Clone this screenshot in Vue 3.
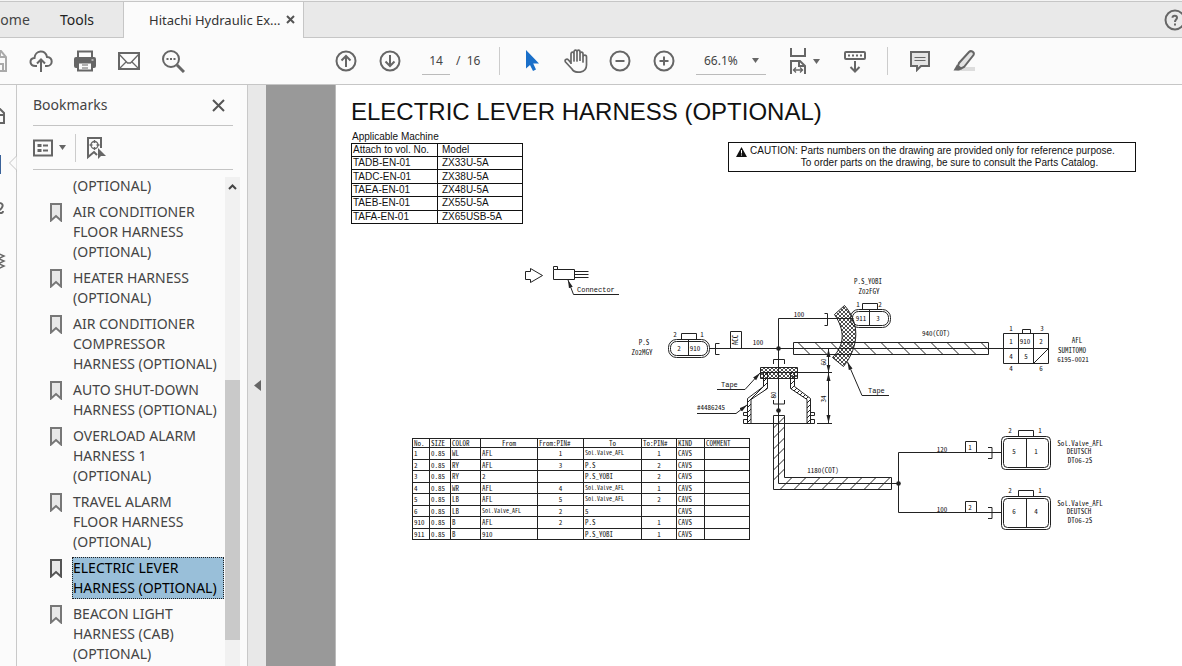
<script setup>
import { ref } from 'vue'

const page = ref('14')
const zoom = ref('66.1%')

const bookmarks = [
  { lines: '(OPTIONAL)', cont: true },
  { lines: 'AIR CONDITIONER\nFLOOR HARNESS\n(OPTIONAL)' },
  { lines: 'HEATER HARNESS\n(OPTIONAL)' },
  { lines: 'AIR CONDITIONER\nCOMPRESSOR\nHARNESS (OPTIONAL)' },
  { lines: 'AUTO SHUT-DOWN\nHARNESS (OPTIONAL)' },
  { lines: 'OVERLOAD ALARM\nHARNESS 1\n(OPTIONAL)' },
  { lines: 'TRAVEL ALARM\nFLOOR HARNESS\n(OPTIONAL)' },
  { lines: 'ELECTRIC LEVER\nHARNESS (OPTIONAL)', active: true },
  { lines: 'BEACON LIGHT\nHARNESS (CAB)\n(OPTIONAL)' },
]

const machines = [
  ['TADB-EN-01', 'ZX33U-5A'],
  ['TADC-EN-01', 'ZX38U-5A'],
  ['TAEA-EN-01', 'ZX48U-5A'],
  ['TAEB-EN-01', 'ZX55U-5A'],
  ['TAFA-EN-01', 'ZX65USB-5A'],
]

const wires = [
  ['1', '0.85', 'WL', 'AFL', '1', 'Sol.Valve_AFL', '1', 'CAVS', ''],
  ['2', '0.85', 'RY', 'AFL', '3', 'P.S', '2', 'CAVS', ''],
  ['3', '0.85', 'RY', '2', '', 'P.S_YOBI', '2', 'CAVS', ''],
  ['4', '0.85', 'WR', 'AFL', '4', 'Sol.Valve_AFL', '1', 'CAVS', ''],
  ['5', '0.85', 'LB', 'AFL', '5', 'Sol.Valve_AFL', '2', 'CAVS', ''],
  ['6', '0.85', 'LB', 'Sol.Valve_AFL', '2', '5', '', 'CAVS', ''],
  ['910', '0.85', 'B', 'AFL', '2', 'P.S', '1', 'CAVS', ''],
  ['911', '0.85', 'B', '910', '', 'P.S_YOBI', '1', 'CAVS', ''],
]

const valves = [
  { dy: 0, wire: '1', len: '120', a: '5', b: '1' },
  { dy: 60, wire: '2', len: '100', a: '6', b: '4' },
]

const mainHatch = Array.from({ length: 12 }, (_, i) => 798 + Math.round(i * 16.6))
const downHatch = [424, 434, 445, 455, 466, 476]
const lowHatch = Array.from({ length: 8 }, (_, i) => 780 + i * 14)
</script>

<template>
  <div class="app">
    <header class="tabs">
      <button class="tab home">Home</button>
      <button class="tab tools">Tools</button>
      <div class="tab doc">
        <span>Hitachi Hydraulic Ex...</span>
        <button class="x" aria-label="Close tab">
          <svg width="9" height="9" viewBox="0 0 9 9"><path d="M1 1l7 7M8 1l-7 7" stroke="#555" stroke-width="2" /></svg>
        </button>
      </div>
      <button class="help" aria-label="Help">
        <svg width="22" height="22" viewBox="0 0 22 22" fill="none" stroke="#666" stroke-width="2">
          <circle cx="11" cy="11" r="9.5" />
          <path d="M8.5 8.8C8.5 6.2 13 6.2 13 8.8C13 10.6 11 10.6 11 13M11 14.5v2" />
        </svg>
      </button>
    </header>

    <div class="toolbar">
      <div class="group files">
        <button class="tool" aria-label="Save">
          <svg width="24" height="26" viewBox="0 0 24 26" fill="none" stroke="#aaa" stroke-width="2">
            <path d="M2 3h14l5 6v14H2zM15 4v5h6M12 23v-7h6v7" />
          </svg>
        </button>
        <button class="tool" aria-label="Upload">
          <svg width="24" height="24" viewBox="0 0 24 24" fill="none" stroke="#666" stroke-width="2">
            <path d="M8 17H6.500C0 17 0 9.500 5.500 9C6 1 16.500 0 18 8C24.500 8.500 24 17 18 17h-2M12 23V11M8 14.500l4-4l4 4" />
          </svg>
        </button>
        <button class="tool" aria-label="Print">
          <svg width="24" height="24" viewBox="0 0 24 24">
            <path d="M5 2.500h14V9H5z" fill="#fbfbfb" stroke="#666" stroke-width="2" />
            <path d="M3 8h18a2 2 0 0 1 2 2v7a2 2 0 0 1-2 2H3a2 2 0 0 1-2-2v-7a2 2 0 0 1 2-2z" fill="#666" />
            <path d="M5 13.500h14v8H5z" fill="#fbfbfb" stroke="#666" stroke-width="2" />
            <path d="M9 16h6M9 19h6" stroke="#666" />
            <path d="M18.500 11h2" stroke="#fff" />
          </svg>
        </button>
        <button class="tool" aria-label="Mail">
          <svg width="24" height="24" viewBox="0 0 24 24" fill="none" stroke="#666">
            <path d="M2 4h20v16H2z" stroke-width="2" />
            <path d="M2 5l8.500 9h3L22 5M3 19l6-6M21 19l-6-6" stroke-width="1.300" />
          </svg>
        </button>
        <button class="tool" aria-label="Find">
          <svg width="24" height="24" viewBox="0 0 24 24" fill="none" stroke="#666">
            <circle cx="10" cy="10" r="8" stroke-width="2" />
            <path d="M16 16l7 7" stroke-width="3" />
            <path d="M5.500 10h2M9 10h2M12.500 10h2" stroke-width="2" />
          </svg>
        </button>
      </div>

      <div class="group paging">
        <button class="tool" aria-label="Previous page">
          <svg width="22" height="22" viewBox="0 0 22 22" fill="none" stroke="#666" stroke-width="2">
            <circle cx="11" cy="11" r="9.500" /><path d="M11 17V6M6.500 10.500L11 6l4.500 4.500" />
          </svg>
        </button>
        <button class="tool" aria-label="Next page">
          <svg width="22" height="22" viewBox="0 0 22 22" fill="none" stroke="#666" stroke-width="2">
            <circle cx="11" cy="11" r="9.500" /><path d="M11 5v11M6.500 11.500L11 16l4.500-4.500" />
          </svg>
        </button>
        <div class="pages">
          <input v-model="page" class="page-no" aria-label="Page number" />
          <span class="total">/&nbsp; 16</span>
        </div>
      </div>

      <div class="group view">
        <button class="tool" aria-label="Select">
          <svg width="24" height="24" viewBox="0 0 24 24"><path d="M6 1v18.500l4-3.500l3 6l3-1.500l-2.800-6H19z" fill="#1a6fc9" /></svg>
        </button>
        <button class="tool" aria-label="Pan">
          <svg width="24" height="24" viewBox="0 0 24 24" fill="none" stroke="#666" stroke-width="1.700" stroke-linejoin="round">
            <path d="M7 15V5c0-2.500 3-2.500 3 0v7V3c0-2.500 3-2.500 3 0v9V3c0-2.500 3-2.500 3 0v9M16 5c0-2.500 3-2.500 3 0v8V8c0-2.500 3.500-2.500 3.500 0v8c0 9-12 8.500-14.500 4L1.500 13c-1.500-2.500 1.500-3.500 3-2L7 14" />
          </svg>
        </button>
        <button class="tool" aria-label="Zoom out">
          <svg width="22" height="22" viewBox="0 0 22 22" fill="none" stroke="#666" stroke-width="2">
            <circle cx="11" cy="11" r="9.500" /><path d="M6.500 11h9" />
          </svg>
        </button>
        <button class="tool" aria-label="Zoom in">
          <svg width="22" height="22" viewBox="0 0 22 22" fill="none" stroke="#666" stroke-width="2">
            <circle cx="11" cy="11" r="9.500" /><path d="M6.500 11h9M11 6.500v9" />
          </svg>
        </button>
        <label class="zoom">
          <select v-model="zoom" aria-label="Zoom level"><option>66.1%</option><option>100%</option></select>
          <svg class="caret" width="7" height="5" viewBox="0 0 7 5"><path d="M0 0h7L3.500 5z" fill="#666" /></svg>
        </label>
        <button class="fit" aria-label="Fit width">
          <svg width="18" height="26" viewBox="0 0 18 26" fill="none" stroke="#666" stroke-width="2">
            <path d="M2 0v8h14V0M2 26V13h9l5 5v8M10 13v5h6" />
            <path d="M4 22h10M7 19.500L4.500 22L7 24.500M11 19.500l2.500 2.500l-2.500 2.500" stroke-width="1.300" />
          </svg>
          <svg width="7" height="5" viewBox="0 0 7 5"><path d="M0 0h7L3.500 5z" fill="#666" /></svg>
        </button>
        <button class="tool" aria-label="Read mode">
          <svg width="24" height="24" viewBox="0 0 24 24" fill="none" stroke="#666" stroke-width="2">
            <rect x="2" y="3" width="20" height="7" rx="1" />
            <path d="M5 6.500h2M9 6.500h2M13 6.500h2M17 6.500h2M12 12v10M7.500 18l4.500 4.500l4.500-4.500" />
          </svg>
        </button>
      </div>

      <div class="group notes">
        <button class="tool" aria-label="Comment">
          <svg width="22" height="22" viewBox="0 0 22 22" fill="#e4e4e4" stroke="#666" stroke-width="2">
            <path d="M2 2h18v14h-8l-4 4v-4H2z" /><path d="M5.500 7.500h11M5.500 10.500h11" stroke-width="1.200" />
          </svg>
        </button>
        <button class="tool" aria-label="Highlight">
          <svg width="24" height="24" viewBox="0 0 24 24">
            <path d="M8 18h15v4H4z" fill="#ddd" />
            <path d="M7 14L17 3c2-2 6 0 4.500 3L12 18l-3 1.500L6 17z" fill="#e4e4e4" stroke="#666" stroke-width="2" />
            <path d="M5 15.500l5 4.500l-3 1.500H1.500z" fill="#666" />
          </svg>
        </button>
      </div>
    </div>

    <main class="body">
      <nav class="rail" aria-label="Panels">
        <svg width="17" height="200" viewBox="0 0 17 200" fill="none" stroke="#666" stroke-width="2">
          <path d="M-5 24h5l4 4v10h-9M-1 24v6h5" />
          <path d="M0 70v19" stroke="#3a6299" />
          <path d="M0 118c5 1 2 6-2 8M-2 127c3 2 5 1 5-1" />
          <path d="M-3 168l7 3l-6 3M-3 173l7 3l-6 3M-3 178l7 3l-6 3" stroke-width="1.500" />
        </svg>
      </nav>
      <aside class="panel">
        <svg class="notch" width="9" height="18" viewBox="0 0 9 18"><path d="M8.500 0v2L1.500 9l7 7v2" fill="#fbfbfb" stroke="#c4c4c4" /></svg>
        <div class="panel-head">
          <h2>Bookmarks</h2>
          <button class="close" aria-label="Close panel">
            <svg width="13" height="13" viewBox="0 0 13 13"><path d="M1 1l11 11M12 1L1 12" stroke="#555" stroke-width="2" /></svg>
          </button>
        </div>
        <div class="panel-tools">
          <button class="opts" aria-label="Options">
            <svg width="20" height="18" viewBox="0 0 20 18" fill="none" stroke="#666" stroke-width="2">
              <path d="M1 1.500h18v15H1z" />
              <path d="M4.500 6.500h4M4.500 11.500h4" stroke-width="3" /><path d="M10 6.500h5M10 11.500h5" />
            </svg>
            <svg width="7" height="5" viewBox="0 0 7 5"><path d="M0 0h7L3.500 5z" fill="#666" /></svg>
          </button>
          <button class="find" aria-label="Find current bookmark">
            <svg width="21" height="24" viewBox="0 0 21 24" fill="none" stroke="#666" stroke-width="2">
              <path d="M15 12V2H2v19l6-5l3 3" />
              <circle cx="8.500" cy="9" r="3.500" stroke-width="1.300" /><path d="M8.500 4v3M8.500 11v3M3.500 9h3M10.500 9h3" stroke-width="1.300" />
              <path d="M12 12v11l3-3h5z" fill="#666" stroke="none" />
            </svg>
          </button>
        </div>
        <div class="list-wrap">
          <ul class="list">
            <li v-for="(b, i) in bookmarks" :key="i">
              <svg v-if="!b.cont" class="mark" width="12" height="19" viewBox="0 0 12 19">
                <path d="M1 1h10v16.500l-5-4.500l-5 4.500z" fill="#e8e8e8" :stroke="b.active ? '#555' : '#777'" stroke-width="2" />
              </svg>
              <a href="#" :class="{ active: b.active, cont: b.cont }">{{ b.lines }}</a>
            </li>
          </ul>
          <div class="bar">
            <svg width="9" height="6" viewBox="0 0 9 6"><path d="M1 5l3.500-3.500L8 5" fill="none" stroke="#444" stroke-width="2" /></svg>
            <div class="thumb"></div>
          </div>
        </div>
      </aside>
      <button class="split" aria-label="Collapse panel">
        <svg width="7" height="11" viewBox="0 0 7 11"><path d="M7 0v11L0 5.500z" fill="#666" /></svg>
      </button>
      <div class="gutter"></div>

      <article class="sheet">
        <h1>ELECTRIC LEVER HARNESS (OPTIONAL)</h1>
        <div class="intro">
          <table class="machines">
            <caption>Applicable Machine</caption>
            <thead><tr><th>Attach to vol. No.</th><th>Model</th></tr></thead>
            <tbody>
              <tr v-for="m in machines" :key="m[0]"><td>{{ m[0] }}</td><td>{{ m[1] }}</td></tr>
            </tbody>
          </table>
          <div class="caution">
            <svg width="11" height="10" viewBox="0 0 11 10"><path d="M5.500 0L11 10H0z" fill="#111" /><path d="M5.500 3v3.500M5.500 7.500v1" stroke="#fff" /></svg>
            <span>CAUTION:</span>
            <p>Parts numbers on the drawing are provided only for reference purpose.<br />To order parts on the drawing, be sure to consult the Parts Catalog.</p>
          </div>
        </div>

        <div class="drawing">
          <svg class="diagram" width="770" height="300" viewBox="412 250 770 300">
            <defs>
              <pattern id="mesh" width="4" height="4" patternUnits="userSpaceOnUse">
                <path d="M0 0l4 4M4 0l-4 4" stroke="#222" stroke-width="0.800" />
              </pattern>
              <pattern id="slant" width="5" height="5" patternUnits="userSpaceOnUse">
                <path d="M-1 6L6 -1" stroke="#222" stroke-width="1" />
              </pattern>
              <marker id="tip" viewBox="0 0 8 6" refX="8" refY="3" markerWidth="8" markerHeight="6" orient="auto-start-reverse">
                <path d="M0 1l8 2l-8 2z" fill="#222" />
              </marker>
            </defs>

            <g class="ln">
              <path d="M525.500 271.500h5v-3l12 7l-12 7v-3h-5z" />
              <path d="M553.500 269.500h21v10h-21zM553.500 269.500v-3h4v3M574.500 271.500h14M574.500 274.500h14M574.500 277.500h14" />
              <path d="M619 294.500h-45.500L568 280" marker-end="url(#tip)" />
            </g>
            <text class="t7" x="577" y="292">Connector</text>

            <!-- P.S connector and its branch -->
            <g class="ln">
              <rect x="668.500" y="339.500" width="41" height="18" rx="8" />
              <rect x="670.500" y="341.500" width="37" height="14" rx="6" />
              <path d="M681.500 339.500v-6h15v6M688.500 340v16M709.500 348.500h84M719.500 343.500h-4v11h4" />
              <path d="M730.500 348.500v-17h11v17" />
              <path d="M778.500 483.500v-165h75M824.500 313.500h3v12h-3" />
            </g>
            <g class="n">
              <text x="644" y="345">P.S</text><text x="642" y="355">Z02MGY</text>
              <text x="675" y="337">2</text><text x="702" y="337">1</text>
              <text x="679" y="351">2</text><text x="695" y="351">910</text>
              <text x="758" y="345">100</text><text x="799" y="317">100</text>
              <text transform="translate(738 340) rotate(-90)">ACC</text>
            </g>

            <!-- Main covered run -->
            <path class="ln" d="M793.500 342.500h195v12h-195zM793.500 348.500h210" />
            <path v-for="x in mainHatch" :key="x" class="ln" :d="`M${x} 342.500l${Math.min(12, 988 - x)} ${Math.min(12, 988 - x)}`" />

            <!-- Spare connector -->
            <g class="ln">
              <rect x="850.500" y="309.500" width="40" height="18" rx="8" />
              <rect x="852.500" y="311.500" width="36" height="14" rx="6" />
              <path d="M862.500 309.500v-6h15v6M869.500 310v16" />
            </g>
            <path class="mesh" d="M834.500 314.500L844.500 305.500C860 323 859.500 346 843.500 366.500L832.500 357.500C845 345 845 330 834.500 314.500z" />
            <g class="n">
              <text x="868" y="284">P.S_YOBI</text><text x="869" y="294">Z02FGY</text>
              <text x="858" y="307">1</text><text x="880" y="307">2</text>
              <text x="861" y="321">911</text><text x="878" y="321">3</text>
            </g>
            <path class="ln" d="M889 395.500h-27L847.500 362" marker-end="url(#tip)" />
            <text class="t7" x="868" y="393">Tape</text>

            <!-- AFL plug -->
            <path class="ln" d="M1003.500 333.500h45v30h-45zM1018.500 333.500v30M1033.500 333.500v30M1003.500 348.500h45M1033.500 363.500l15-15M1022.500 333.500v-4h8v4" />
            <g class="n">
              <text x="936" y="336">940(COT)</text>
              <text x="1011" y="331">1</text><text x="1042" y="331">3</text>
              <text x="1011" y="344">1</text><text x="1025" y="344">910</text><text x="1041" y="344">2</text>
              <text x="1011" y="359">4</text><text x="1026" y="359">5</text>
              <text x="1011" y="371">4</text><text x="1041" y="371">6</text>
              <text x="1077" y="343">AFL</text><text x="1072" y="353">SUMITOMO</text><text x="1073" y="362">6195-0021</text>
            </g>

            <!-- Boot, tape and dimensions -->
            <path class="slant" d="M763.500 372.500v14l-16 12v25h3.500v-24l16.500-11v-16zM794.500 372.500v14l16 12v25h-3.500v-24l-16.500-11v-16z" />
            <path class="ln" d="M747.500 412.500h-4v3h4M747.500 419.500h-4v4h71v-4h-4M810.500 415.500h4v-3h-4" />
            <path class="mesh" d="M760.500 367.500h37v11h-37z" />
            <g class="ln">
              <path d="M760 372.500h72M817 423.500h15" />
              <path d="M828.500 349v23.500" marker-start="url(#tip)" marker-end="url(#tip)" />
              <path d="M828.500 373v50" marker-start="url(#tip)" marker-end="url(#tip)" />
              <path d="M773.500 364v-4.500h11v4.500M773.500 400v4h11v-4" />
              <path d="M717 389.500h28L760 373" marker-end="url(#tip)" />
              <path d="M697 413.500h39L747 405" marker-end="url(#tip)" />
            </g>
            <text class="t7" x="721" y="387">Tape</text>
            <g class="n">
              <text x="711" y="410">#4486245</text>
              <text transform="translate(776 395) rotate(-90)">80</text>
              <text transform="translate(826 362) rotate(-90)">60</text>
              <text transform="translate(826 399) rotate(-90)">34</text>
              <text x="823" y="473">1180(COT)</text>
            </g>
            <circle cx="778.500" cy="348.500" r="2.300" />
            <circle cx="778.500" cy="410.500" r="2.300" />
            <circle cx="898.500" cy="483.500" r="2.300" />

            <!-- Lower covered run -->
            <path class="ln" d="M773.500 415.500h11v62h107v12h-118zM778.500 483.500h120M898.500 452.500v60" />
            <path v-for="y in downHatch" :key="y" class="ln" :d="`M773.500 ${y + 4}l11-11`" />
            <path v-for="x in lowHatch" :key="'l' + x" class="ln" :d="`M${x} 489.500l12-12`" />

            <!-- Solenoid valves -->
            <g v-for="v in valves" :key="v.wire" :transform="`translate(0 ${v.dy})`">
              <g class="ln">
                <path d="M898.500 452.500h103M965.500 452.500v-11h11v11M988 447.500h4v11h-4" />
                <rect x="1001.500" y="436.500" width="49" height="33" rx="4" />
                <rect x="1003.500" y="438.500" width="45" height="29" rx="4" />
                <path d="M1018.500 436.500v-6h15v6M1026.500 438v30" />
              </g>
              <g class="n">
                <text x="942" y="452">{{ v.len }}</text><text x="970" y="450">{{ v.wire }}</text>
                <text x="1010" y="433">2</text><text x="1040" y="433">1</text>
                <text x="1014" y="454">{{ v.a }}</text><text x="1036" y="454">{{ v.b }}</text>
                <text x="1080" y="446">Sol.Valve_AFL</text><text x="1079" y="454">DEUTSCH</text><text x="1080" y="463">DT06-2S</text>
              </g>
            </g>
          </svg>

          <table class="wires">
            <colgroup><col v-for="n in 9" :key="n" :class="'c' + n" /></colgroup>
            <thead>
              <tr><th>No.</th><th>SIZE</th><th>COLOR</th><th class="mid">From</th><th>From:PIN#</th><th class="mid">To</th><th>To:PIN#</th><th>KIND</th><th>COMMENT</th></tr>
            </thead>
            <tbody>
              <tr v-for="w in wires" :key="w[0]">
                <td v-for="(c, i) in w" :key="i" :class="{ mid: i === 4 || i === 6, tiny: c.length > 12 }">{{ c }}</td>
              </tr>
            </tbody>
          </table>
        </div>
      </article>
    </main>
  </div>
</template>

<style>
html, body { height: 100%; margin: 0; overflow: hidden; }
</style>

<style scoped>
.app { height: 100vh; display: flex; flex-direction: column; overflow: hidden; background: #fbfbfb; color: #444; font: 14px/20px "Noto Sans", "Open Sans", sans-serif; }
button { border: 0; padding: 0; margin: 0; background: none; font: inherit; color: inherit; display: flex; align-items: center; }
svg { display: block; flex: none; }
.tabs { box-sizing: border-box; height: 38px; flex: none; display: flex; border-top: 1px solid #f4f4f4; background: linear-gradient(#c6c6c6 1px, #e9e9e9 1px, #e9e9e9 36px, #c6c6c6 36px); }
.tab { font-size: 14px; height: 37px; align-items: center; display: flex; }
.home { width: 44px; margin-left: -10px; }
.tools { margin-left: 26px; width: 63px; color: #222; }
.doc { box-sizing: border-box; width: 181px; padding: 0 8px 1px 25px; font-size: 13px; justify-content: space-between; color: #333; border: solid #c6c6c6; border-width: 1px 1px 0; background: #fbfbfb; white-space: nowrap; }
.help { margin-left: auto; margin-right: -4px; }
.toolbar { box-sizing: border-box; height: 47px; flex: none; display: flex; align-items: center; border-bottom: 1px solid #c6c6c6; }
.group { display: flex; align-items: center; gap: 20px; height: 28px; }
.tool { width: 24px; justify-content: center; }
.files { margin-left: -15px; }
.paging { margin-left: 149px; }
.pages { display: flex; align-items: center; gap: 6px; }
.page-no { box-sizing: border-box; width: 28px; height: 28px; padding: 0; border: 0; border-bottom: 1px solid #bbb; background: none; text-align: center; font: 12px "Noto Sans", sans-serif; color: #444; }
.total { width: 24px; font-size: 12px; white-space: pre; }
.view { margin-left: 19px; padding-left: 20px; border-left: 1px solid #ccc; }
.zoom { position: relative; display: flex; align-items: center; width: 70px; border-bottom: 1px solid #bbb; height: 27px; }
.zoom select { appearance: none; width: 100%; border: 0; background: none; padding: 0 8px; font: 12px "Noto Sans", sans-serif; color: #444; }
.caret { position: absolute; right: 7px; }
.fit { gap: 6px; margin: 0 3px; }
.notes { margin-left: 20px; padding-left: 20px; border-left: 1px solid #ccc; }
.body { flex: 1; min-height: 0; display: flex; }
.rail { width: 16px; flex: none; border-right: 1px solid #c9c9c9; overflow: hidden; }
.panel { position: relative; width: 230px; flex: none; display: flex; flex-direction: column; border-right: 1px solid #c9c9c9; }
.notch { position: absolute; left: -9px; top: 69px; }
.panel-head { margin: 0 14px 0 16px; height: 40px; display: flex; align-items: center; justify-content: space-between; border-bottom: 1px solid #c4c4c4; }
.panel-head h2 { margin: 0; font-size: 14px; font-weight: 400; }
.close { margin-right: 8px; }
.panel-tools { margin: 0 14px 0 16px; height: 43px; display: flex; align-items: center; border-bottom: 1px solid #c4c4c4; }
.opts { gap: 6px; padding-right: 9px; height: 28px; border-right: 1px solid #ccc; }
.find { margin-left: 10px; }
.list-wrap { flex: 1; min-height: 0; display: flex; justify-content: space-between; margin: 7px 7px 0 33px; }
.list { list-style: none; margin: 0; padding: 0; overflow: hidden; display: flex; flex-direction: column; gap: 4px; }
.list li { display: flex; gap: 10px; }
.mark { margin-top: 2px; }
.list a { min-width: 150px; border: 1px solid transparent; color: #444; text-decoration: none; white-space: pre; }
.list a.cont { margin-left: 22px; margin-top: -2px; }
.list a.active { background: #99bfd9; color: #000; border: 1px dotted #222; }
.bar { width: 15px; flex: none; background: #f1f1f1; display: flex; flex-direction: column; align-items: center; padding-top: 7px; box-sizing: border-box; }
.thumb { width: 100%; height: 260px; margin-top: 190px; background: #c9c9c9; }
.split { width: 18px; flex: none; justify-content: center; background: #e8e8e8; padding-top: 20px; }
.gutter { width: 69px; flex: none; background: #999; border-right: 1px solid #bbb; }
.sheet { flex: 1; min-width: 0; overflow: hidden; background: #fff; color: #111; padding: 12px 0 0 15px; font: 10px/13px "Liberation Sans", Arial, sans-serif; }
.sheet h1 { margin: 0; font-size: 24px; line-height: 30px; font-weight: 400; white-space: nowrap; }
.intro { display: flex; align-items: flex-start; gap: 205px; margin-top: 3px; }
.machines { border-collapse: collapse; width: 172px; height: 81px; flex: none; }
.machines caption { text-align: left; line-height: 13px; padding-left: 1px; white-space: nowrap; }
.machines th, .machines td { border: 1px solid #111; padding: 0 0 0 1px; font-weight: 400; text-align: left; line-height: 12px; }
.machines th:first-child { width: 84px; white-space: nowrap; }
.machines th + th, .machines td + td { padding-left: 4px; }
.caution { box-sizing: border-box; width: 408px; margin-top: 12px; border: 1px solid #111; padding: 2px 7px; display: flex; gap: 3px; line-height: 12px; white-space: nowrap; }
.caution p { margin: 0; }
.caution svg { margin-top: 2px; }
.drawing { display: grid; margin-top: 26px; padding-left: 61px; justify-content: start; }
.diagram, .wires { grid-area: 1 / 1; }
.wires { align-self: end; justify-self: start; margin-bottom: 10px; border-collapse: collapse; table-layout: fixed; width: 337px; height: 102px; font: 7px/8px "Noto Sans Mono CJK JP", "Liberation Mono", monospace; }
.wires th, .wires td { border: 1px solid #222; padding: 0 1px; font-weight: 400; text-align: left; white-space: nowrap; overflow: hidden; }
.wires .mid { text-align: center; }
.wires .tiny { font-size: 6px; }
.c1 { width: 17px; } .c2 { width: 21px; } .c3 { width: 30px; } .c4 { width: 57px; } .c5 { width: 46px; }
.c6 { width: 58px; } .c7 { width: 35px; } .c8 { width: 28px; } .c9 { width: 45px; }
.ln { fill: none; stroke: #222; stroke-width: 1; }
.mesh { fill: url(#mesh); stroke: #222; stroke-width: 1; }
.slant { fill: url(#slant); stroke: #222; stroke-width: 1; }
.diagram text { fill: #111; font-family: "Noto Sans Mono CJK JP", "Liberation Mono", monospace; font-size: 7px; }
.n text { text-anchor: middle; }
.diagram .t7 { font-family: "Liberation Mono", monospace; }
circle { fill: #222; }
.tabs circle, .toolbar circle, .panel circle { fill: none; }
</style>
